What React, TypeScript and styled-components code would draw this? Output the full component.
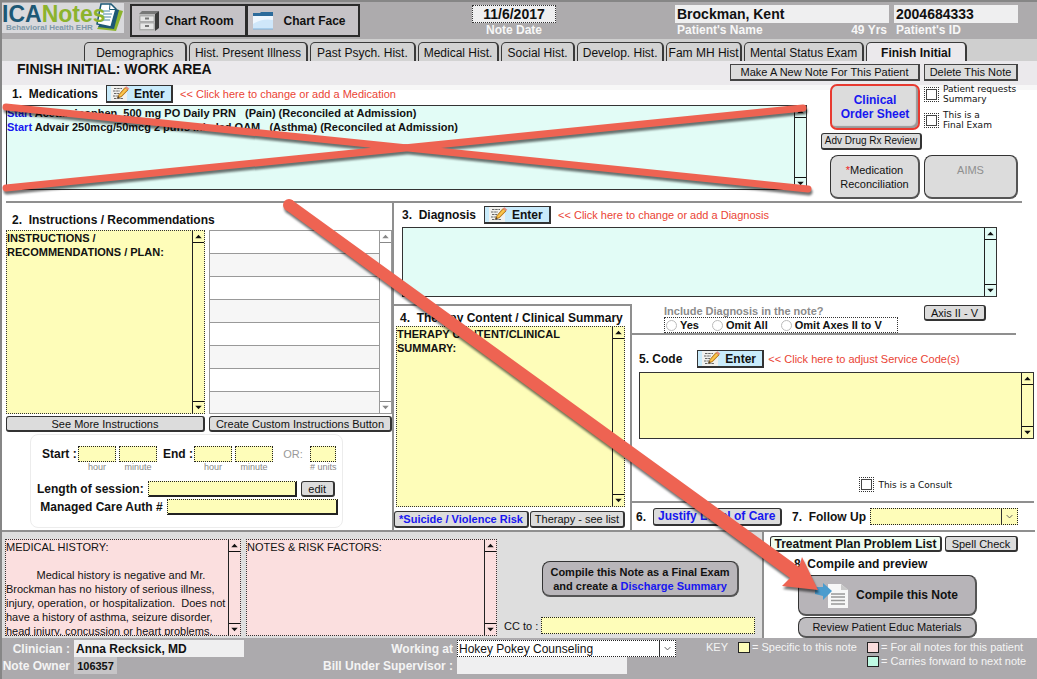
import React from "react";
import styled, { createGlobalStyle, css } from "styled-components";

const GlobalStyle = createGlobalStyle`
  *, *::before, *::after { box-sizing: border-box; }
  body { margin: 0; background: #fff; }
  body, button, input, select, textarea {
    font-family: "Liberation Sans", Arial, sans-serif;
    font-size: 11px;
    line-height: 14px;
    color: #111;
  }
  button, input, select, textarea { margin: 0; border-radius: 0; min-width: 0; }
`;

const yellow = "#fefdb9";
const mint = "#e2fcf6";
const pink = "#fbdfdf";
const rule = "#8f8f8f";

const Page = styled.div`
  position: relative;
  min-height: 100vh;
  display: flex;
  flex-direction: column;
  border-top: 2px solid #868686;
  border-left: 2px solid #868686;
  overflow: hidden;
`;

/* ---------- header ---------- */

const Header = styled.header`
  display: grid;
  grid-template-columns: 128px 230px 112fr 84px 119fr 343px;
  height: 37px;
  padding-right: 19px;
  background: #adabad;
`;

const Logo = styled.div`
  position: relative;
  width: 122px;
  height: 30px;
  margin-top: 1px;
  background: #d9d9dc;
  svg { position: absolute; right: 1px; top: 0; }
`;

const LogoName = styled.div`
  position: relative;
  z-index: 1;
  font-size: 23px;
  line-height: 22px;
  font-weight: bold;
  color: #1d5875;
  span { color: #8cb32d; }
`;

const LogoTag = styled.div`
  padding-left: 4px;
  font-size: 8px;
  line-height: 6px;
  font-weight: bold;
  color: #7e98a8;
`;

const ChartButtons = styled.nav`
  display: flex;
  padding: 2px 0;
`;

const ChartButton = styled.button`
  flex: 1;
  display: flex;
  align-items: center;
  gap: 5px;
  padding: 0 6px;
  border: 2px solid #2b2b2b;
  background: #c5c2c6;
  font-size: 12px;
  font-weight: bold;
  & + & { margin-left: -1px; gap: 10px; padding-left: 4px; }
`;

const HeadField = styled.div<{ $center?: boolean; $grow?: number }>`
  flex: ${(p) => p.$grow ?? 1} 1 0;
  grid-column: ${(p) => (p.$center ? 4 : "auto")};
  display: flex;
  flex-direction: column;
  padding-top: 3px;
  text-align: ${(p) => (p.$center ? "center" : "left")};
`;

const HeadInput = styled.input<{ $dotted?: boolean }>`
  width: 100%;
  height: 18px;
  padding: 0 2px;
  border: ${(p) => (p.$dotted ? "1px dotted #333" : "0")};
  background: #efeff0;
  font-size: 14px;
  font-weight: bold;
  text-align: inherit;
`;

const HeadCaption = styled.div`
  display: flex;
  justify-content: space-between;
  padding: 0 2px;
  font-size: 12px;
  font-weight: bold;
  color: #f7f7f7;
  label { flex: 1; }
`;

const Patient = styled.div`
  grid-column: 6;
  display: flex;
  gap: 5px;
`;

/* ---------- tabs and title ---------- */

const Tabs = styled.nav`
  display: flex;
  align-items: flex-end;
  gap: 2px;
  height: 22px;
  padding: 0 70px 0 82px;
  background: #cfcfcf;
`;

const Tab = styled.button<{ $w: number; $active?: boolean }>`
  flex: ${(p) => p.$w} 1 0;
  height: 19px;
  padding: 2px 0 0;
  overflow: hidden;
  white-space: nowrap;
  border: solid #3a3a3a;
  border-width: 1px 2px 0 1px;
  border-radius: 5px 5px 0 0;
  background: ${(p) => (p.$active ? "#ebe9ec" : "#d3d3d3")};
  font-size: 12px;
  font-weight: ${(p) => (p.$active ? "bold" : "normal")};
`;

const TitleBar = styled.div`
  display: flex;
  justify-content: space-between;
  height: 22px;
  padding: 0 19px 0 15px;
  background: #ebe9ec;
  h1 { margin: 0; font-size: 14px; line-height: 17px; }
  div { display: flex; gap: 4px; padding-top: 3px; }
`;

/* ---------- shared parts ---------- */

const PlainButton = styled.button<{ $w?: number; $h?: number; $link?: number }>`
  width: ${(p) => (p.$w ? `${p.$w}px` : "auto")};
  height: ${(p) => p.$h ?? 16}px;
  padding: 0;
  white-space: nowrap;
  border: 1px solid #333;
  border-right-width: 2px;
  border-bottom-width: 2px;
  border-radius: 3px;
  background: #dcdcdc;
  line-height: 12px;
  ${(p) => p.$link && css`
    font-size: ${p.$link}px;
    font-weight: bold;
    color: #1717f0;
  `}
`;

const SquareButton = styled(PlainButton)`
  border-radius: 0;
  border-color: #444;
`;

const ReviewButton = styled(PlainButton)`
  margin: 9px 0 5px;
  font-size: 10px;
`;

const MintButton = styled(PlainButton)`
  background: #effdf0;
  font-size: 12px;
  font-weight: bold;
`;

const BigButton = styled.button<{ $tone?: string; $muted?: boolean }>`
  padding: 0;
  border: 1px solid #333;
  border-right: 2px solid #555;
  border-bottom: 2px solid #555;
  border-radius: 8px;
  background: ${(p) => p.$tone ?? "#dcdcdc"};
  color: ${(p) => (p.$muted ? "#8f8f8f" : "#111")};
  padding-bottom: ${(p) => (p.$muted ? 14 : 0)}px;
  b { color: #1717f0; }
  i { color: #e22; font-style: normal; }
`;

const Rule = styled.hr<{ $r: number; $l?: number }>`
  height: 2px;
  margin: 0 ${(p) => p.$r}px 0 ${(p) => p.$l ?? 0}px;
  border: 0;
  background: ${rule};
`;

const HeadingRow = styled.div<{ $h: number; $l?: number; $t?: number }>`
  display: flex;
  align-items: center;
  height: ${(p) => p.$h}px;
  padding: ${(p) => p.$t ?? 0}px 0 0 ${(p) => p.$l ?? 0}px;
`;

const Heading = styled.h2`
  margin: 0;
  font-size: 12px;
  white-space: pre;
`;

const EnterBox = styled.button<{ $apart?: boolean }>`
  display: flex;
  align-items: center;
  gap: 4px;
  width: 67px;
  height: 18px;
  margin: ${(p) => (p.$apart ? "0 4px 0 15px" : "0 7px 0 8px")};
  padding: 0 0 0 2px;
  border: 1px solid #333;
  border-right-width: 2px;
  border-bottom-width: 2px;
  background: #c9ebfb;
  font-size: 12px;
  font-weight: bold;
`;

const Hint = styled.span`
  color: #ea4435;
`;

const Box = styled.div<{ $bg: string; $h: number; $dotted?: boolean; $grey?: boolean }>`
  display: flex;
  height: ${(p) => p.$h}px;
  border: 1px ${(p) => (p.$dotted ? "dotted" : "solid")} ${(p) => (p.$grey ? "#999" : "#333")};
  background: ${(p) => p.$bg};
`;

const Area = styled.textarea<{ $bold?: boolean }>`
  flex: 1;
  padding: 0;
  border: 0;
  resize: none;
  overflow: hidden;
  background: transparent;
  font-weight: ${(p) => (p.$bold ? "bold" : "normal")};
`;

const MedList = styled.div`
  flex: 1;
  font-weight: bold;
  white-space: pre;
  span { color: #1717f0; }
`;

const Track = styled.div<{ $grey?: boolean }>`
  display: flex;
  flex-direction: column;
  justify-content: space-between;
  width: 12px;
  border-left: 1px solid ${(p) => (p.$grey ? "#999" : "#222")};
  color: ${(p) => (p.$grey ? "#888" : "#111")};
  svg { display: block; width: 11px; height: 12px; }
  svg:first-child { border-bottom: 1px solid; }
  svg:last-child { border-top: 1px solid; }
`;

const TickLabel = styled.label`
  display: flex;
  align-items: center;
  gap: 4px;
  font-family: "DejaVu Sans", Verdana, sans-serif;
  font-size: 9px;
  line-height: 10px;
`;

const Tick = styled.input.attrs({ type: "checkbox" })`
  appearance: none;
  flex: none;
  width: 15px;
  height: 15px;
  border: 1px dotted #333;
  background: #fff;
  box-shadow: inset 0 0 0 1px #fff, inset 0 0 0 2px #444;
`;

const YellowInput = styled.input<{ $w?: number; $raised?: boolean; $h?: number }>`
  width: ${(p) => (p.$w ? `${p.$w}px` : "auto")};
  height: ${(p) => p.$h ?? 16}px;
  padding: 0 2px;
  border: 1px dotted #222;
  background: ${yellow};
  ${(p) => p.$raised && css`
    border-right: 2px solid #222;
    border-bottom: 2px solid #222;
  `}
`;

const DropBox = styled.div<{ $w: number; $bg: string }>`
  display: flex;
  width: ${(p) => p.$w}px;
  height: 17px;
  border: 1px dotted #222;
  background: ${(p) => p.$bg};
  select {
    flex: 1;
    appearance: none;
    padding: 0 1px;
    border: 0;
    background: transparent;
    font-size: 12px;
  }
  svg { width: 16px; height: 15px; border-left: 1px solid #333; }
`;

/* ---------- medications ---------- */

const Medications = styled.section`
  display: grid;
  grid-template-columns: 1fr 197px;
  gap: 14px;
  height: 118px;
  padding: 0 19px 0 4px;
  background: linear-gradient(#ebe9ec 2px, #f7f7f7 2px, #f7f7f7 7px, #fff 7px);
`;

const Orders = styled.div`
  display: flex;
  flex-direction: column;
  align-items: flex-start;
  padding-top: 1px;
`;

const OrderRow = styled.div<{ $h: number }>`
  display: grid;
  grid-template-columns: 90px 1fr;
  gap: 4px;
  width: 100%;
  height: ${(p) => p.$h}px;
  padding-left: 9px;
`;

const ClinicalButton = styled.button`
  padding: 0;
  border: 2px solid #e83a30;
  border-radius: 7px;
  background: #dcdcdc;
  box-shadow: inset -2px -2px 1px #999;
  font-size: 12px;
  font-weight: bold;
  color: #1717f0;
`;

const TickStack = styled.div`
  display: flex;
  flex-direction: column;
  gap: 6px;
  white-space: nowrap;
`;

/* ---------- middle ---------- */

const Middle = styled.div`
  display: grid;
  grid-template-columns: minmax(0, 392fr) minmax(0, 643fr);
`;

const Instructions = styled.section`
  padding-left: 4px;
  border-right: 2px solid ${rule};
`;

const InstructionGrid = styled.div`
  display: grid;
  grid-template-columns: 199fr 183fr;
  gap: 2px 4px;
`;

const Rows = styled.ul`
  flex: 1;
  margin: 0;
  padding: 0;
  list-style: none;
  li { height: 23px; border-bottom: 1px solid #999; }
  li:nth-child(even) { background: #f6f6f6; }
  li:last-child { height: 21px; border: 0; }
`;

const TimeCard = styled.div`
  display: flex;
  flex-direction: column;
  width: 313px;
  height: 94px;
  margin: 2px 0 2px 24px;
  padding: 11px 4px 0 6px;
  border: 1px solid #ececec;
  border-radius: 8px;
`;

const TimeRow = styled.div`
  display: flex;
  gap: 3px;
  padding: 0 1px 0 5px;
  margin-bottom: 9px;
`;

const TimeWord = styled.span<{ $w: number; $light?: boolean }>`
  width: ${(p) => p.$w}px;
  line-height: 16px;
  white-space: nowrap;
  font-size: ${(p) => (p.$light ? 11 : 12)}px;
  font-weight: ${(p) => (p.$light ? "normal" : "bold")};
  color: ${(p) => (p.$light ? "#999" : "#111")};
  text-align: ${(p) => (p.$light ? "center" : "left")};
`;

const TimeUnit = styled.label`
  display: flex;
  flex-direction: column;
  align-items: center;
  white-space: nowrap;
  font-size: 9px;
  line-height: 10px;
  color: #888;
`;

const LineRow = styled.div`
  display: flex;
  align-items: center;
  gap: 4px;
  margin-bottom: 2px;
  label { white-space: nowrap; font-size: 12px; font-weight: bold; }
`;

const Diagnosis = styled.section`
  padding: 0 40px 7px 8px;
`;

const LowerRight = styled.div`
  display: grid;
  grid-template-columns: minmax(0, 238fr) minmax(0, 405fr);
`;

const Therapy = styled.section`
  padding: 0 5px 2px 2px;
  border-top: 2px solid ${rule};
  border-right: 2px solid ${rule};
`;

const TherapyButtons = styled.div`
  display: grid;
  grid-template-columns: 135fr 95fr;
  gap: 1px;
  margin: 4px 0 0 -2px;
`;

const IncludeRow = styled.div`
  display: flex;
  justify-content: space-between;
  align-items: flex-start;
  height: 29px;
  padding: 1px 51px 0 32px;
`;

const IncludeSet = styled.fieldset`
  width: 234px;
  margin: 0;
  padding: 0;
  border: 0;
  legend { padding: 0; line-height: 12px; font-weight: bold; color: #8b8b8b; }
`;

const Choices = styled.div`
  display: flex;
  gap: 13px;
  height: 16px;
  padding-left: 1px;
  border: 1px dotted #333;
  label { display: flex; align-items: center; gap: 3px; font-weight: bold; }
  input {
    appearance: none;
    width: 11px;
    height: 11px;
    border: 1px solid #bbb;
    border-radius: 50%;
    background: #fff;
  }
`;

const CodeBody = styled.div`
  padding: 0 3px 0 7px;
`;

const ConsultRow = styled.div`
  display: flex;
  justify-content: flex-end;
  padding: 38px 85px 9px 0;
`;

const CareRow = styled.div`
  display: flex;
  align-items: center;
  height: 27px;
  padding: 0 19px 0 4px;
  label { margin: 0 4px 0 auto; font-size: 12px; font-weight: bold; white-space: pre; }
`;

/* ---------- bottom ---------- */

const Bottom = styled.div`
  display: grid;
  grid-template-columns: minmax(0, 762fr) minmax(0, 273fr);
  height: 106px;
`;

const History = styled.section`
  display: grid;
  grid-template-columns: 236fr 251fr 253fr;
  gap: 5px;
  padding: 7px 7px 2px 3px;
  border-right: 2px solid ${rule};
  background: #dedede;
`;

const FinalExam = styled.div`
  display: flex;
  flex-direction: column;
  align-items: flex-start;
  padding-top: 22px;
  > button { width: 197px; height: 36px; margin: 0 0 20px 40px; font-weight: bold; }
`;

const CcRow = styled.label`
  display: flex;
  align-items: center;
  justify-content: space-between;
  width: 100%;
  padding-left: 2px;
`;

const Compile = styled.section`
  padding: 4px 19px 0 6px;
`;

const ProblemRow = styled.div`
  display: grid;
  grid-template-columns: 172fr 73fr;
  gap: 3px;
`;

const CompileStack = styled.div`
  display: grid;
  grid-template-rows: 41px 21px;
  gap: 1px;
  width: 179px;
  margin-left: 28px;
`;

const CompileButton = styled(BigButton)`
  display: flex;
  align-items: center;
  gap: 7px;
  padding-left: 14px;
  font-size: 12px;
  font-weight: bold;
`;

/* ---------- footer ---------- */

const Footer = styled.footer`
  flex: 1;
  display: grid;
  grid-template-columns: 310fr 380fr 345fr;
  padding-top: 2px;
  background: #acaaad;
`;

const FootGrid = styled.div<{ $label: number }>`
  display: grid;
  grid-template-columns: ${(p) => p.$label}px 1fr;
  grid-auto-rows: 17px;
  align-content: start;
  align-items: center;
  gap: 0 4px;
  label { text-align: right; font-size: 12px; font-weight: bold; color: #f4f4f4; white-space: nowrap; }
`;

const FootInput = styled.input<{ $w: number; $dim?: boolean }>`
  width: ${(p) => p.$w}px;
  height: 17px;
  padding: 0 2px;
  border: 0;
  background: ${(p) => (p.$dim ? "#c6c5c7" : "#efeff0")};
  font-size: ${(p) => (p.$dim ? 11 : 12)}px;
  font-weight: bold;
  text-align: ${(p) => (p.$dim ? "center" : "left")};
`;

const Key = styled.div`
  display: grid;
  grid-template-columns: 32px 129px 1fr;
  grid-auto-rows: 14px;
  align-content: start;
  padding-left: 14px;
  color: #f4f4f4;
  white-space: nowrap;
`;

const KeyItem = styled.span<{ $c: string }>`
  grid-column: ${(p) => (p.$c === yellow ? 2 : 3)};
  display: flex;
  align-items: center;
  gap: 2px;
  &::before {
    content: "";
    width: 12px;
    height: 11px;
    border: 1px solid #222;
    background: ${(p) => p.$c};
  }
`;

const Marks = styled.svg`
  position: absolute;
  left: -2px;
  top: -2px;
  z-index: 2;
  pointer-events: none;
  filter: drop-shadow(1px 3px 1px rgba(0, 0, 0, 0.55));
`;

/* ---------- drawings ---------- */

const Scroll = ({ grey }: { grey?: boolean }) => (
  <Track $grey={grey} aria-hidden>
    <svg viewBox="0 0 11 12"><path d="M2 8L5.5 4L9 8Z" fill="currentColor" /></svg>
    <svg viewBox="0 0 11 12"><path d="M2 4L5.5 8L9 4Z" fill="currentColor" /></svg>
  </Track>
);

const Chevron = () => (
  <svg viewBox="0 0 16 15" aria-hidden>
    <path d="M5 6L8 9L11 6" fill="none" stroke="#555" />
  </svg>
);

const Enter = ({ apart }: { apart?: boolean }) => (
  <EnterBox type="button" $apart={apart}>
    <svg width="21" height="15" viewBox="0 0 21 15" aria-hidden>
      <path d="M2 0H18V15H2Z" fill="#f1f1ee" />
      <path d="M5 2.500H13M4 5H11M5 7.500H10M4 10H9M5 12.500H14" stroke="#666" strokeDasharray="2.500 .7" />
      <path d="M8.500 12L10 8.500L16 1.500L19 4L12.500 10.700Z" fill="#f3b02f" stroke="#8f5d17" strokeWidth=".7" />
      <path d="M11 9.800L17.500 2.800" stroke="#fbdc7c" strokeWidth=".9" />
      <path d="M16 1.500L17.300 .3L20.300 2.700L19 4Z" fill="#e8877c" />
      <path d="M8.500 12L9.200 10.200L10.500 11.300Z" fill="#222" />
    </svg>
    Enter
  </EnterBox>
);

const LogoMark = () => (
  <svg width="34" height="30" viewBox="0 0 34 30" aria-hidden>
    <path d="M22 5L34 8L27 28L8 26Z" fill="#8cb32d" />
    <path d="M20 4L30 7L25 26L9 24Z" fill="#1d5875" />
    <path d="M12 1H22L27 6L22 24L8 21Z" fill="#fff" stroke="#1d5875" strokeWidth="1.500" />
    <path d="M21 1L20.500 6.500H27" fill="none" stroke="#1d5875" />
    <path d="M14 8H21M14 11H23M14 14H22M14 17H21" stroke="#4b86a5" />
  </svg>
);

const Cabinet = () => (
  <svg width="22" height="22" viewBox="0 0 22 22" aria-hidden>
    <path d="M4 1H21L17 4H1Z" fill="#777" />
    <path d="M17 4L21 1V18L17 21Z" fill="#3b3b3b" />
    <path d="M1 4H17V21H1Z" fill="#b9b9b9" />
    <path d="M2 6H16V11.500H2ZM2 13H16V19.500H2Z" fill="#e6e6e6" stroke="#999" strokeWidth=".7" />
    <path d="M7 8.500H11M7 16H11" stroke="#777" strokeWidth="2" />
  </svg>
);

const Folder = () => (
  <svg width="22" height="20" viewBox="0 0 22 20" aria-hidden>
    <path d="M1 2H8L9 1H21V18H1Z" fill="#2c6b9b" />
    <path d="M1 5H21V18H1Z" fill="#cfe7fa" />
    <path d="M1 5H21V9Q10 7 1 13Z" fill="#eef7ff" />
    <path d="M1 18H21" stroke="#7eb2dc" />
  </svg>
);

const CompileIcon = () => (
  <svg width="36" height="28" viewBox="0 0 36 28" aria-hidden>
    <path d="M15 3H28L35 9V27H15Z" fill="#f7f7f7" />
    <path d="M28 3V9H35Z" fill="#c9c9c9" />
    <path d="M18 13H32M18 16H32M18 19.500H32M18 23H32" stroke="#999" strokeWidth="1.600" />
    <path d="M2 6H10V2L19 10L10 19V15L2 13Z" fill="#4b9cce" />
  </svg>
);

const tabs: [string, number][] = [
  ["Demographics", 103],
  ["Hist. Present Illness", 120],
  ["Past Psych. Hist.", 106],
  ["Medical Hist.", 81],
  ["Social Hist.", 73],
  ["Develop. Hist.", 87],
  ["Fam MH Hist", 75],
  ["Mental Status Exam", 121],
  ["Finish Initial", 101],
];

const times: [string, number][] = [["Start", 33], ["End", 28]];

const medicalHistory = `MEDICAL HISTORY:

          Medical history is negative and Mr.
Brockman has no history of serious illness,
injury, operation, or hospitalization.  Does not
have a history of asthma, seizure disorder,
head injury, concussion or heart problems.`;

export default function App() {
  return (
    <Page>
      <GlobalStyle />
      <Header>
        <Logo>
          <LogoName>ICA<span>Notes</span></LogoName>
          <LogoTag>Behavioral Health EHR</LogoTag>
          <LogoMark />
        </Logo>
        <ChartButtons>
          <ChartButton type="button"><Cabinet />Chart Room</ChartButton>
          <ChartButton type="button"><Folder />Chart Face</ChartButton>
        </ChartButtons>
        <HeadField $center>
          <HeadInput id="date" $dotted defaultValue="11/6/2017" />
          <HeadCaption><label htmlFor="date">Note Date</label></HeadCaption>
        </HeadField>
        <Patient>
          <HeadField $grow={214}>
            <HeadInput id="name" defaultValue="Brockman, Kent" />
            <HeadCaption><label htmlFor="name">Patient's Name</label><span>49 Yrs</span></HeadCaption>
          </HeadField>
          <HeadField $grow={124}>
            <HeadInput id="pid" defaultValue="2004684333" />
            <HeadCaption><label htmlFor="pid">Patient's ID</label></HeadCaption>
          </HeadField>
        </Patient>
      </Header>

      <Tabs>
        {tabs.map(([name, w]) => (
          <Tab key={name} type="button" $w={w} $active={name === "Finish Initial"}>{name}</Tab>
        ))}
      </Tabs>

      <TitleBar>
        <h1>FINISH INITIAL: WORK AREA</h1>
        <div>
          <SquareButton type="button" $w={190} $h={17}>Make A New Note For This Patient</SquareButton>
          <SquareButton type="button" $w={94} $h={17}>Delete This Note</SquareButton>
        </div>
      </TitleBar>

      <Medications>
        <div>
          <HeadingRow $h={22} $l={6}>
            <Heading>1.  Medications</Heading>
            <Enter />
            <Hint>&lt;&lt; Click here to change or add a Medication</Hint>
          </HeadingRow>
          <Box $bg={mint} $h={85}>
            <MedList>
              <div><span>Start</span> Acetaminophen, 500 mg PO Daily PRN   (Pain) (Reconciled at Admission)</div>
              <div><span>Start</span> Advair 250mcg/50mcg 2 puffs Inhaled QAM   (Asthma) (Reconciled at Admission)</div>
            </MedList>
            <Scroll />
          </Box>
        </div>
        <Orders>
          <OrderRow $h={40}>
            <ClinicalButton type="button">Clinical<br />Order Sheet</ClinicalButton>
            <TickStack>
              <TickLabel><Tick /><span>Patient requests<br />Summary</span></TickLabel>
              <TickLabel><Tick /><span>This is a<br />Final Exam</span></TickLabel>
            </TickStack>
          </OrderRow>
          <ReviewButton type="button" $w={101} $h={17}>Adv Drug Rx Review</ReviewButton>
          <OrderRow $h={44}>
            <BigButton type="button"><i>*</i>Medication<br />Reconciliation</BigButton>
            <BigButton type="button" $muted>AIMS</BigButton>
          </OrderRow>
        </Orders>
      </Medications>
      <Rule $l={4} $r={15} />

      <Middle>
        <Instructions>
          <HeadingRow $h={27} $l={6} $t={6}><Heading>2.  Instructions / Recommendations</Heading></HeadingRow>
          <InstructionGrid>
            <Box $bg={yellow} $h={184} $dotted>
              <Area $bold aria-label="Instructions" defaultValue={"INSTRUCTIONS /\nRECOMMENDATIONS / PLAN:"} />
              <Scroll />
            </Box>
            <Box $bg="#fff" $h={184} $grey>
              <Rows>{Array.from({ length: 8 }, (_, i) => <li key={i} />)}</Rows>
              <Scroll grey />
            </Box>
            <PlainButton type="button">See More Instructions</PlainButton>
            <PlainButton type="button">Create Custom Instructions Button</PlainButton>
          </InstructionGrid>
          <TimeCard>
            <TimeRow>
              {times.map(([word, w]) => (
                <React.Fragment key={word}>
                  <TimeWord $w={w}>{word} :</TimeWord>
                  <TimeUnit><YellowInput $w={38} />hour</TimeUnit>
                  <TimeUnit><YellowInput $w={38} />minute</TimeUnit>
                  <span />
                </React.Fragment>
              ))}
              <TimeWord $w={28} $light>OR:</TimeWord>
              <TimeUnit><YellowInput $w={26} /># units</TimeUnit>
            </TimeRow>
            <LineRow>
              <label htmlFor="length">Length of session:</label>
              <YellowInput id="length" $w={149} $raised />
              <PlainButton type="button" $w={34}>edit</PlainButton>
            </LineRow>
            <LineRow>
              <label htmlFor="auth">&nbsp;Managed Care Auth #</label>
              <YellowInput id="auth" $w={173} $raised />
            </LineRow>
          </TimeCard>
        </Instructions>

        <div>
          <Diagnosis>
            <HeadingRow $h={24}>
              <Heading>3.  Diagnosis</Heading>
              <Enter />
              <Hint>&lt;&lt; Click here to change or add a Diagnosis</Hint>
            </HeadingRow>
            <Box $bg={mint} $h={70}><Area aria-label="Diagnosis" /><Scroll /></Box>
          </Diagnosis>
          <LowerRight>
            <Therapy>
              <HeadingRow $h={20} $l={4} $t={4}><Heading>4.  Therapy Content / Clinical Summary</Heading></HeadingRow>
              <Box $bg={yellow} $h={181} $dotted>
                <Area $bold aria-label="Therapy content" defaultValue={"THERAPY CONTENT/CLINICAL\nSUMMARY:"} />
                <Scroll />
              </Box>
              <TherapyButtons>
                <PlainButton type="button" $h={17} $link={11}>*Suicide / Violence Risk</PlainButton>
                <PlainButton type="button" $h={17}>Therapy - see list</PlainButton>
              </TherapyButtons>
            </Therapy>
            <section>
              <IncludeRow>
                <IncludeSet>
                  <legend>Include Diagnosis in the note?</legend>
                  <Choices>
                    {["Yes", "Omit All", "Omit Axes II to V"].map((c) => (
                      <label key={c}><input type="radio" name="include" />{c}</label>
                    ))}
                  </Choices>
                </IncludeSet>
                <PlainButton type="button" $w={62}>Axis II - V</PlainButton>
              </IncludeRow>
              <Rule $r={21} />
              <CodeBody>
                <HeadingRow $h={37} $t={11}>
                  <Heading>5. Code</Heading>
                  <Enter apart />
                  <Hint>&lt;&lt; Click here to adjust Service Code(s)</Hint>
                </HeadingRow>
                <Box $bg={yellow} $h={67}><Area aria-label="Code" /><Scroll /></Box>
              </CodeBody>
              <ConsultRow><TickLabel><Tick />This is a Consult</TickLabel></ConsultRow>
              <Rule $r={3} />
              <CareRow>
                <Heading>6.  </Heading>
                <PlainButton type="button" $w={129} $h={18} $link={12}>Justify Level of Care</PlainButton>
                <label htmlFor="follow">7.  Follow Up</label>
                <DropBox $w={148} $bg={yellow}>
                  <select id="follow"><option /></select>
                  <Chevron />
                </DropBox>
              </CareRow>
            </section>
          </LowerRight>
        </div>
      </Middle>
      <Rule $r={2} />

      <Bottom>
        <History>
          <Box $bg={pink} $h={97} $dotted>
            <Area aria-label="Medical history" defaultValue={medicalHistory} />
            <Scroll />
          </Box>
          <Box $bg={pink} $h={97} $dotted>
            <Area aria-label="Notes and risk factors" defaultValue="NOTES & RISK FACTORS:" />
            <Scroll />
          </Box>
          <FinalExam>
            <BigButton type="button" $tone="#b9b6ba">
              Compile this Note as a Final Exam<br />and create a <b>Discharge Summary</b>
            </BigButton>
            <CcRow>CC to :<YellowInput $w={214} $h={17} /></CcRow>
          </FinalExam>
        </History>
        <Compile>
          <ProblemRow>
            <MintButton type="button">Treatment Plan Problem List</MintButton>
            <PlainButton type="button">Spell Check</PlainButton>
          </ProblemRow>
          <HeadingRow $h={23} $l={24}><Heading>8. Compile and preview</Heading></HeadingRow>
          <CompileStack>
            <CompileButton type="button" $tone="#b7b4b8"><CompileIcon />Compile this Note</CompileButton>
            <BigButton type="button" $tone="#bfbdc0">Review Patient Educ Materials</BigButton>
          </CompileStack>
        </Compile>
      </Bottom>

      <Footer>
        <FootGrid $label={68}>
          <label htmlFor="clinician">Clinician :</label>
          <FootInput id="clinician" $w={170} defaultValue="Anna Recksick, MD" />
          <label htmlFor="owner">Note Owner</label>
          <FootInput id="owner" $w={43} $dim defaultValue="106357" />
        </FootGrid>
        <FootGrid $label={141}>
          <label htmlFor="working">Working at</label>
          <DropBox $w={219} $bg="#fff">
            <select id="working"><option>Hokey Pokey Counseling</option></select>
            <Chevron />
          </DropBox>
          <label htmlFor="supervisor">Bill Under Supervisor :</label>
          <FootInput id="supervisor" $w={170} />
        </FootGrid>
        <Key>
          <span>KEY</span>
          <KeyItem $c={yellow}>= Specific to this note</KeyItem>
          <KeyItem $c="#f9dcdc">= For all notes for this patient</KeyItem>
          <KeyItem $c="#bffbe4">= Carries forward to next note</KeyItem>
        </Key>
      </Footer>

      <Marks width="1037" height="679" viewBox="0 0 1037 679" aria-hidden>
        <path d="M6 107L808 189M6 188L803 108" stroke="#ee6352" strokeWidth="7" strokeLinecap="round" />
        <circle cx="289" cy="205" r="6" fill="#ee6352" />
        <path d="M292 200L799 567L802 557L818 590L782 586L790 578L286 210Z" fill="#ee6352" />
      </Marks>
    </Page>
  );
}
